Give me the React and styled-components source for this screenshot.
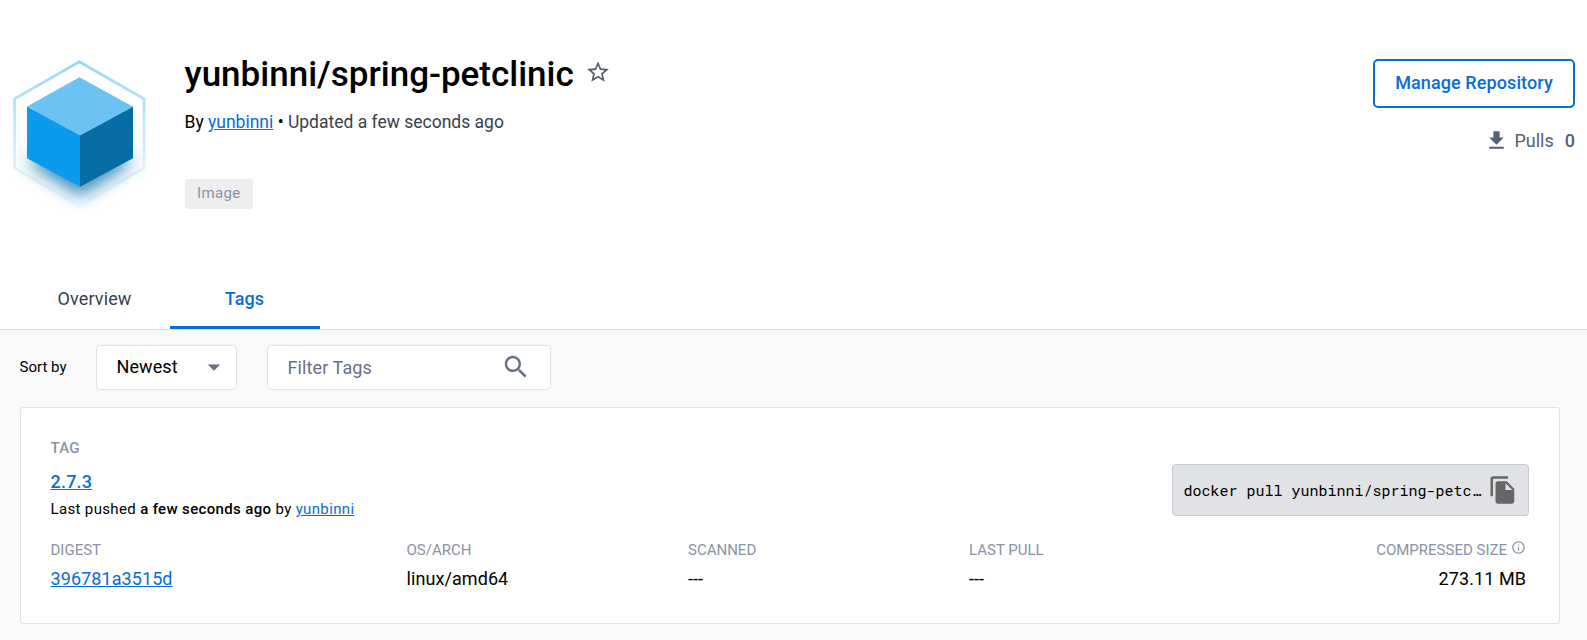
import React from "react";
import styled, { createGlobalStyle } from "styled-components";

const GlobalStyle = createGlobalStyle`
  *, *::before, *::after { box-sizing: border-box; }
  body {
    margin: 0;
    background: #f9f9f9;
    color: #000;
    font: 400 17.5px/24px Roboto, "Liberation Sans", sans-serif;
  }
`;

const Page = styled.div`
  min-height: 640px;
  overflow: hidden;
`;

const Header = styled.header`
  height: 330px;
  background: #fff;
  border-bottom: 1px solid #e1e2e6;
  display: flex;
  flex-direction: column;
  justify-content: space-between;
`;

const Summary = styled.div`
  display: flex;
  padding: 53px 12px 0 8px;
`;

const Logo = styled.svg`
  width: 144px;
  height: 160px;
  flex: none;
  margin-right: 32.5px;
`;

const Info = styled.div`
  flex: 1;
`;

const TitleRow = styled.div`
  display: flex;
  gap: 11.5px;
  height: 43px;
  padding-top: 1px;
`;

const Title = styled.h1`
  margin: 0;
  font-size: 35px;
  line-height: 42px;
  font-weight: 500;
`;

const StarIcon = styled.svg`
  width: 26px;
  height: 26px;
  margin-top: 5px;
  fill: #556072;
`;

const Byline = styled.p`
  margin: 14px 0 0;
  color: #393f49;
`;

const Dark = styled.span`
  color: #000;
`;

const Link = styled.a`
  color: #086dd7;
  text-decoration: underline;
  font-weight: ${(p) => (p.$strong ? 500 : 400)};
`;

const Badge = styled.span`
  display: inline-block;
  margin-top: 45px;
  padding: 0 12px 0 12.5px;
  height: 30px;
  border-radius: 3px;
  background: #eeeef0;
  color: #8993a5;
  font-size: 15px;
  line-height: 28px;
  letter-spacing: 0.38px;
`;

const Actions = styled.div`
  display: flex;
  flex-direction: column;
  align-items: flex-end;
  padding-top: 6px;
`;

const ManageButton = styled.button`
  width: 202px;
  height: 49px;
  padding: 0 0 1px;
  border: 2px solid #086dd7;
  border-radius: 5px;
  background: #fff;
  color: #086dd7;
  font: 500 18px/24px Roboto, sans-serif;
  letter-spacing: 0.1px;
  white-space: nowrap;
`;

const Pulls = styled.div`
  display: flex;
  align-items: center;
  margin-top: 20px;
  color: #556072;
  font-size: 18px;
`;

const PullsIcon = styled.svg`
  width: 25px;
  height: 25px;
  margin-right: 5.5px;
  fill: #556072;
`;

const PullCount = styled.span`
  margin-left: 11px;
  font-weight: 500;
`;

const Tabs = styled.nav`
  display: flex;
  height: 60px;
  padding-left: 20px;
`;

const Tab = styled.div`
  width: 150px;
  padding: 18px 1px 0 0;
  text-align: center;
  font-size: 18px;
  letter-spacing: 0.13px;
  color: ${(p) => (p.$active ? "#086dd7" : "#393f49")};
  font-weight: ${(p) => (p.$active ? 500 : 400)};
  border-bottom: 3px solid ${(p) => (p.$active ? "#086dd7" : "transparent")};
`;

const Toolbar = styled.div`
  display: flex;
  align-items: center;
  padding: 15px 20px 0 19.5px;
`;

const SortLabel = styled.span`
  width: 76.5px;
  padding-bottom: 2px;
  font-size: 15px;
`;

const Control = styled.div`
  display: flex;
  align-items: center;
  justify-content: space-between;
  width: ${(p) => p.$width}px;
  height: 45px;
  margin-right: 30px;
  padding: 0 ${(p) => p.$end}px 0 19.5px;
  border: 1px solid #e1e2e6;
  border-radius: 5px;
  background: #fff;
  font-size: 18px;
  letter-spacing: 0.1px;
  color: ${(p) => (p.$muted ? "#677285" : "#000")};
`;

const Selected = styled.span`
  padding-bottom: 2px;
`;

const Caret = styled.svg`
  width: 30px;
  height: 30px;
  margin-bottom: 1px;
  fill: #677285;
`;

const SearchIcon = styled.svg`
  width: 30px;
  height: 30px;
  margin-bottom: 1.5px;
  fill: #677285;
`;

const Card = styled.section`
  width: 1540px;
  height: 217px;
  margin: 17px 0 0 20px;
  padding: 28px 30px 0 29.5px;
  border: 1px solid #e1e2e6;
  border-radius: 3px;
  background: #fff;
`;

const CardTop = styled.div`
  display: flex;
  justify-content: space-between;
  height: 102px;
`;

const Label = styled.div`
  display: flex;
  align-items: flex-start;
  color: #8993a5;
  font-size: 15px;
  line-height: 24px;
  letter-spacing: ${(p) => (p.$strong ? "0.2px" : "0")};
  font-weight: ${(p) => (p.$strong ? 500 : 400)};
`;

const TagName = styled.div`
  margin-top: 10px;
  font-size: 18px;
  letter-spacing: 0.2px;
`;

const Pushed = styled.div`
  margin-top: 3px;
  font-size: 15px;
  letter-spacing: 0.35px;

  b { font-weight: 500; }
`;

const Command = styled.div`
  display: flex;
  align-items: center;
  justify-content: space-between;
  width: 357px;
  height: 52px;
  margin: 28px 0 0;
  padding: 0 10px 0 10.5px;
  border: 1px solid #c4c8d1;
  border-radius: 4px;
  background: #e1e2e6;
`;

const CommandText = styled.code`
  padding-bottom: 1px;
  font-family: "Roboto Mono", "DejaVu Sans Mono", monospace;
  font-size: 15px;
  letter-spacing: 0;
  white-space: pre;
`;

const CopyIcon = styled.svg`
  width: 30px;
  height: 30px;
  fill: #666;
`;

const Details = styled.div`
  display: grid;
  grid-template-columns: 356px 281.5px 281px 1fr 170px;
  margin-right: 3px;
`;

const Detail = styled.div`
  display: flex;
  flex-direction: column;
  align-items: ${(p) => (p.$end ? "flex-end" : "flex-start")};
  gap: 5px;
  font-size: 18px;
  letter-spacing: 0.08px;
`;

const InfoIcon = styled.svg`
  width: 15px;
  height: 15px;
  margin: 2px 0 0 4px;
  fill: #8993a5;
`;

const CubeLogo = () => (
  <Logo viewBox="8 53 144 160">
    <defs>
      <linearGradient id="edge" x1="0" y1="61" x2="0" y2="206" gradientUnits="userSpaceOnUse">
        <stop offset="0" stopColor="#9ad6f8" />
        <stop offset="0.3" stopColor="#b7e1fa" />
        <stop offset="0.72" stopColor="#e1f3fd" />
        <stop offset="1" stopColor="#e8f6fe" stopOpacity="0.3" />
      </linearGradient>
      <filter id="soft" x="-50%" y="-50%" width="200%" height="200%">
        <feGaussianBlur stdDeviation="9" />
      </filter>
      <clipPath id="frame"><rect x="8" y="53" width="144" height="156" /></clipPath>
    </defs>
    <path d="M79.3 61.8 144 98.700V168L79.3 206 14.600 168V98.700Z" fill="none" stroke="url(#edge)" strokeWidth="2.8" />
    <g clipPath="url(#frame)">
      <path d="M80 136 134 162 80 197 26 162Z" fill="#066da5" opacity="0.78" filter="url(#soft)" />
    </g>
    <path d="M27 106.5 80 135V186.7L27 158.2Z" fill="#0a9bee" />
    <path d="M133 106.5 80 135V186.7L133 158.2Z" fill="#066da5" />
    <path d="M79.5 77.3 133 106.7 80 135.5 27 106.5Z" fill="#6cc2f3" />
  </Logo>
);

const columns = [
  ["OS/ARCH", "linux/amd64"],
  ["SCANNED", "---"],
  ["LAST PULL", "---"],
];

export default function App() {
  return (
    <Page>
      <GlobalStyle />
      <Header>
        <Summary>
          <CubeLogo />
          <Info>
            <TitleRow>
              <Title>yunbinni/spring-petclinic</Title>
              <StarIcon viewBox="0 0 24 24">
                <path d="M22 9.24l-7.19-.62L12 2 9.19 8.63 2 9.24l5.46 4.73L5.82 21 12 17.27 18.18 21l-1.63-7.03L22 9.24zM12 15.4l-3.76 2.27 1-4.28-3.32-2.88 4.38-.38L12 6.1l1.71 4.04 4.38.38-3.32 2.88 1 4.28L12 15.4z" />
              </StarIcon>
            </TitleRow>
            <Byline>
              <Dark>By </Dark><Link>yunbinni</Link><Dark> • </Dark>Updated a few seconds ago
            </Byline>
            <Badge>Image</Badge>
          </Info>
          <Actions>
            <ManageButton>Manage Repository</ManageButton>
            <Pulls>
              <PullsIcon viewBox="0 0 24 24"><path d="M19 9h-4V3H9v6H5l7 7 7-7zM5 18v2h14v-2H5z" /></PullsIcon>
              Pulls
              <PullCount>0</PullCount>
            </Pulls>
          </Actions>
        </Summary>
        <Tabs>
          <Tab>Overview</Tab>
          <Tab $active>Tags</Tab>
        </Tabs>
      </Header>
      <Toolbar>
        <SortLabel>Sort by</SortLabel>
        <Control $width={141} $end={7}>
          <Selected>Newest</Selected>
          <Caret viewBox="0 0 24 24"><path d="M7 10l5 5 5-5z" /></Caret>
        </Control>
        <Control $width={284} $end={19} $muted>
          Filter Tags
          <SearchIcon viewBox="0 0 24 24">
            <path d="M15.5 14h-.79l-.28-.27C15.41 12.59 16 11.11 16 9.5 16 5.91 13.09 3 9.5 3S3 5.91 3 9.5 5.91 16 9.5 16c1.61 0 3.09-.59 4.23-1.57l.27.28v.79l5 4.99L20.49 19l-4.99-5zm-6 0C7.01 14 5 11.99 5 9.5S7.01 5 9.5 5 14 7.01 14 9.5 11.99 14 9.5 14z" />
          </SearchIcon>
        </Control>
      </Toolbar>
      <Card>
        <CardTop>
          <div>
            <Label $strong>TAG</Label>
            <TagName><Link $strong>2.7.3</Link></TagName>
            <Pushed>Last pushed <b>a few seconds ago</b> by <Link>yunbinni</Link></Pushed>
          </div>
          <Command>
            <CommandText>docker pull yunbinni/spring-petc…</CommandText>
            <CopyIcon viewBox="0 0 24 24">
              <path d="M16 1H4c-1.100 0-2 .9-2 2v14h2V3h12V1zm-1 4l6 6v10c0 1.100-.9 2-2 2H7.990C6.890 23 6 22.100 6 21l.01-14c0-1.100.89-2 1.990-2h7zm-1 7h5.500L14 6.500V12z" />
            </CopyIcon>
          </Command>
        </CardTop>
        <Details>
          <Detail>
            <Label>DIGEST</Label>
            <Link>396781a3515d</Link>
          </Detail>
          {columns.map(([label, value]) => (
            <Detail key={label}>
              <Label>{label}</Label>
              <span>{value}</span>
            </Detail>
          ))}
          <Detail $end>
            <Label>
              COMPRESSED SIZE
              <InfoIcon viewBox="0 0 24 24">
                <path d="M11 7h2v2h-2zm0 4h2v6h-2zm1-9C6.480 2 2 6.480 2 12s4.480 10 10 10 10-4.480 10-10S17.520 2 12 2zm0 18c-4.410 0-8-3.590-8-8s3.590-8 8-8 8 3.590 8 8-3.590 8-8 8z" />
              </InfoIcon>
            </Label>
            <span>273.11 MB</span>
          </Detail>
        </Details>
      </Card>
    </Page>
  );
}
